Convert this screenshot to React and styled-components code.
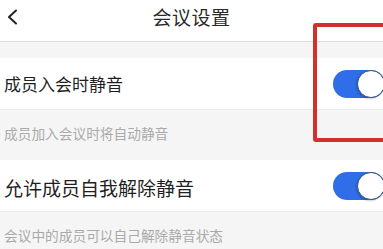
import React from 'react';
import styled, { createGlobalStyle } from 'styled-components';

const GlobalStyle = createGlobalStyle`
  html, body {
    margin: 0;
    padding: 0;
    background: #f5f5f5;
    overflow: hidden;
  }
  body {
    font-family: "Noto Sans CJK SC", "Noto Sans", sans-serif;
  }
`;

const Page = styled.div`
  position: relative;
  width: 383px;
  height: 249px;
  overflow: hidden;
  background: #f5f5f5;
`;

const Header = styled.header`
  position: relative;
  height: 41px;
  display: flex;
  align-items: center;
  justify-content: center;
  background: #fff;
  border-bottom: 1px solid #dcdcdc;
`;

const BackButton = styled.div`
  position: absolute;
  left: 6px;
  top: 9px;
  width: 14px;
  height: 16px;
  display: flex;
`;

const Title = styled.h1`
  margin: 0;
  margin-top: -8px;
  font-size: 19px;
  font-weight: 400;
  color: #2a2a2a;
  letter-spacing: 0.5px;
`;

const Spacer = styled.div`
  height: 16px;
`;

const Row = styled.div`
  height: 51px;
  display: flex;
  align-items: center;
  justify-content: space-between;
  padding-left: 4px;
  background: #fff;
  border-bottom: 1px solid #ececec;
`;

const Label = styled.span`
  font-size: ${(p) => p.$size}px;
  color: #1f1f1f;
  margin-top: ${(p) => p.$shift || 0}px;
`;

const Note = styled.div`
  height: 50px;
  display: flex;
  align-items: center;
  padding-left: 4px;
  padding-bottom: 5px;
  box-sizing: border-box;
  font-size: 13.7px;
  color: #aaaaaa;
`;

const Track = styled.div`
  position: relative;
  flex: none;
  width: 52px;
  height: 28px;
  margin-right: -2px;
  border-radius: 14px;
  background: #2f6ee8;
`;

const Knob = styled.div`
  position: absolute;
  right: 0;
  top: 0;
  width: 28px;
  height: 28px;
  box-sizing: border-box;
  border-radius: 50%;
  background: #fff;
  border: 1.5px solid #3a4f7a;
  box-shadow: -1px 1px 2px rgba(0, 0, 0, 0.2);
`;

const Highlight = styled.div`
  position: absolute;
  left: 313px;
  top: 23px;
  width: 90px;
  height: 119px;
  box-sizing: border-box;
  border: 4.5px solid #d2302b;
  border-radius: 3px;
  pointer-events: none;
`;

function Toggle() {
  return (
    <Track>
      <Knob />
    </Track>
  );
}

export default function App() {
  return (
    <Page>
      <GlobalStyle />
      <Header>
        <BackButton>
          <svg width="14" height="16" viewBox="0 0 14 16">
            <path d="M10 1.5 L3 8 L10 14.5" fill="none" stroke="#222" strokeWidth="2" strokeLinecap="round" strokeLinejoin="round" />
          </svg>
        </BackButton>
        <Title>会议设置</Title>
      </Header>
      <Spacer />
      <Row>
        <Label $size={17}>成员入会时静音</Label>
        <Toggle />
      </Row>
      <Note>成员加入会议时将自动静音</Note>
      <Row>
        <Label $size={19} $shift={4}>允许成员自我解除静音</Label>
        <Toggle />
      </Row>
      <Note>会议中的成员可以自己解除静音状态</Note>
      <Highlight />
    </Page>
  );
}
